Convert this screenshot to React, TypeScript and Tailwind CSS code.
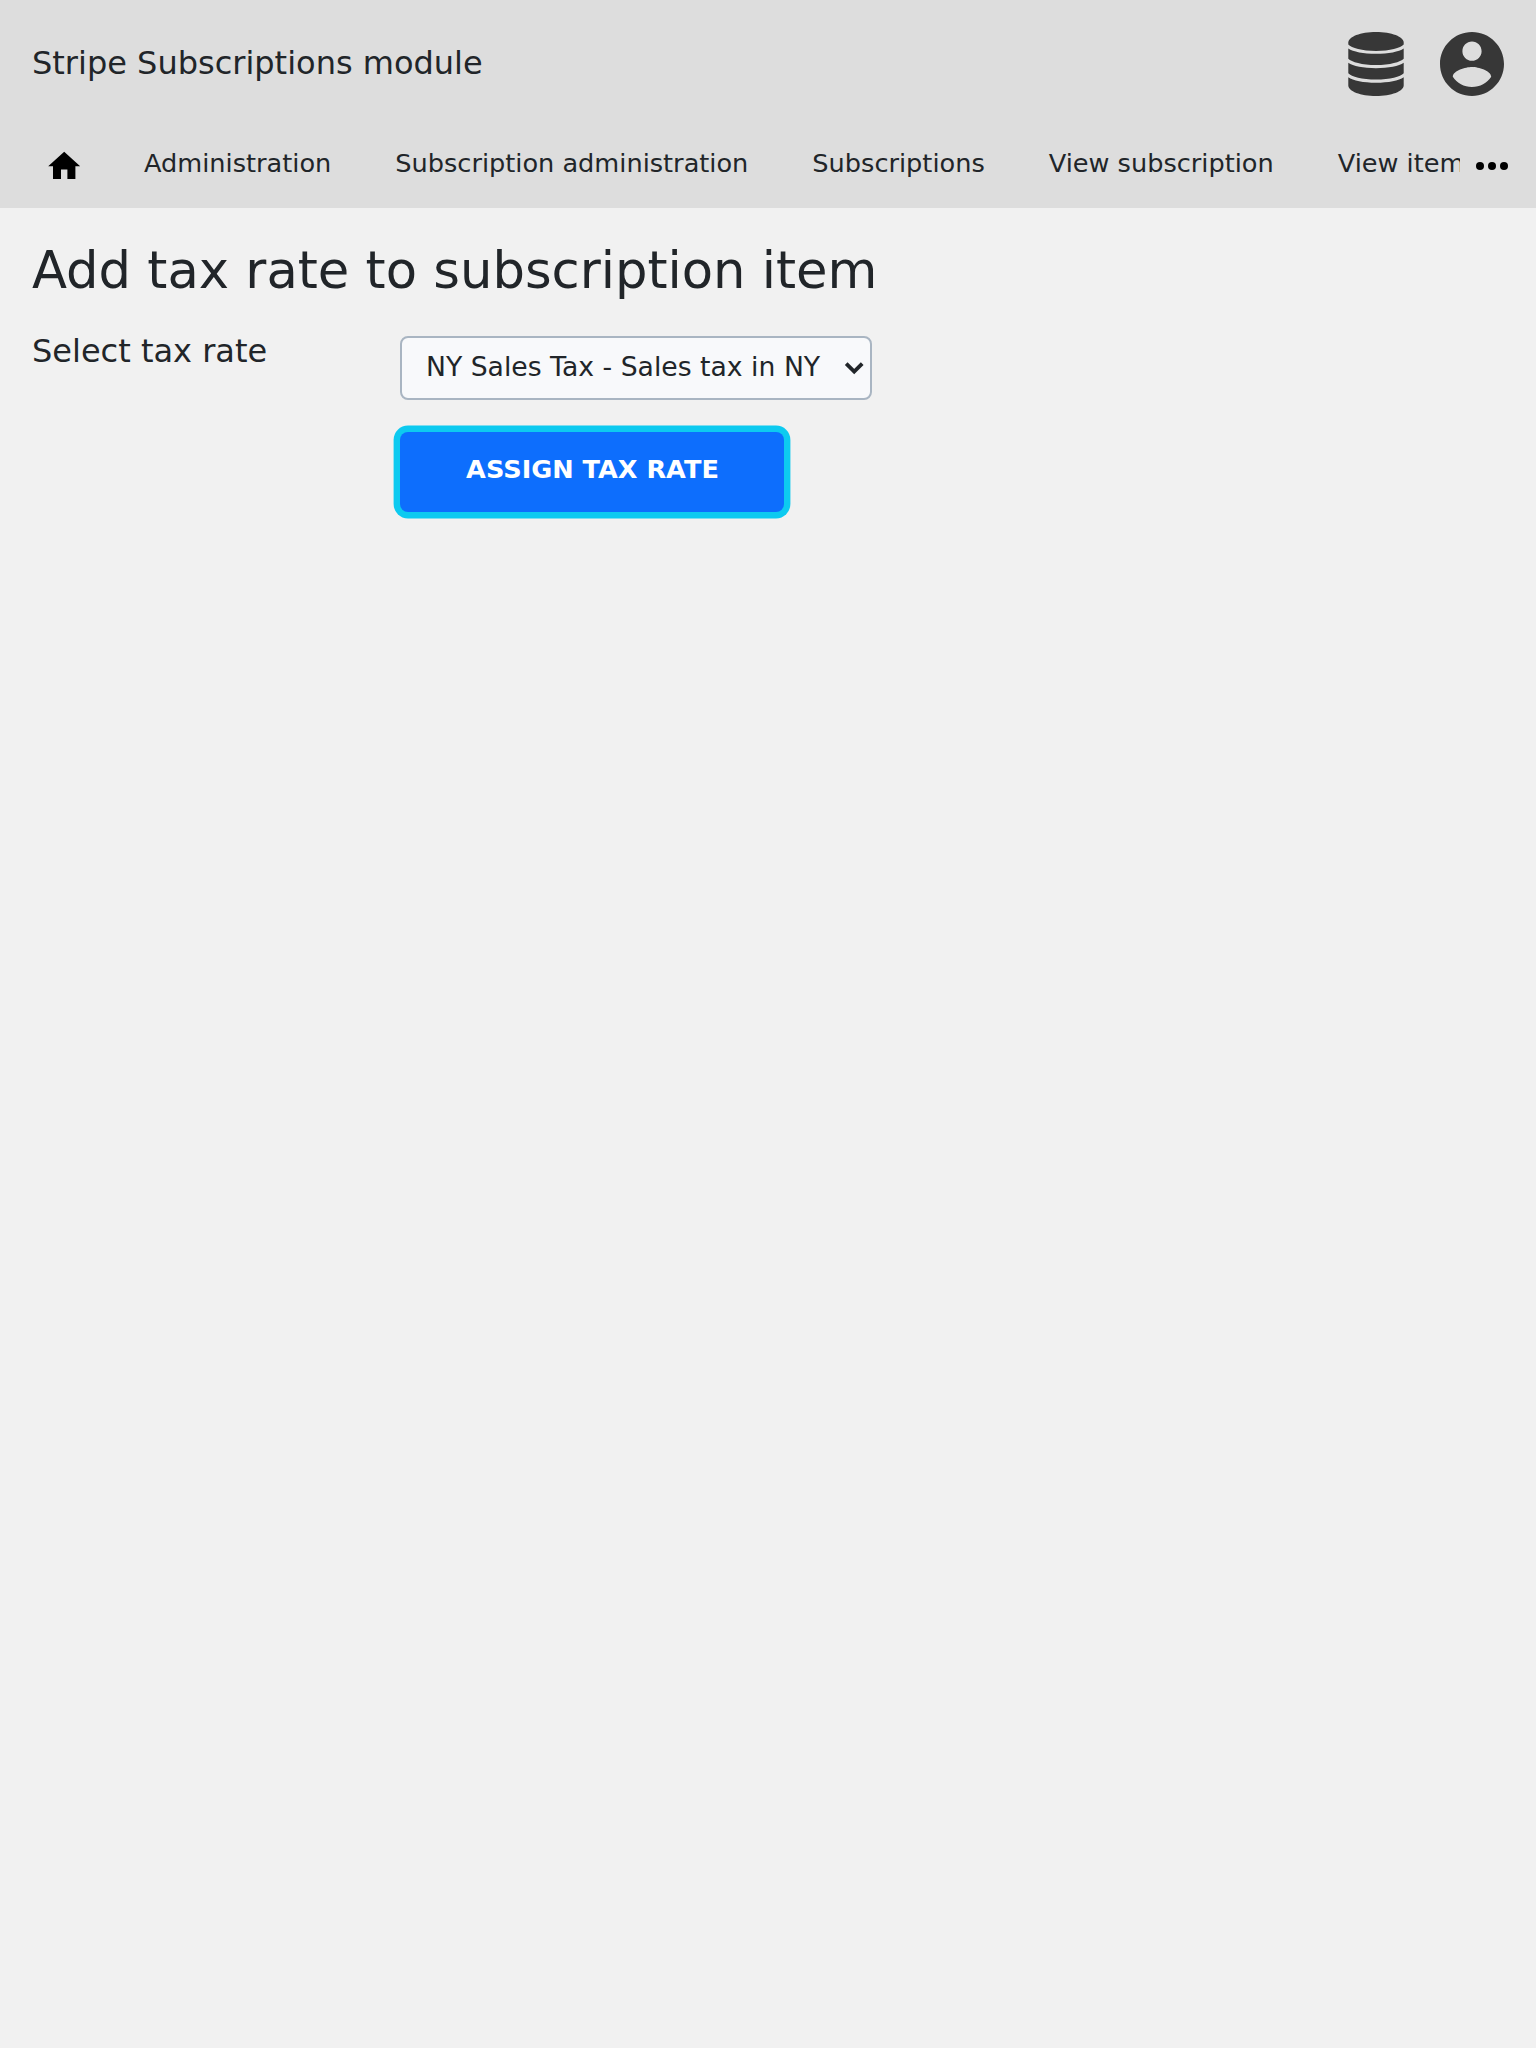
const nav = ['Administration', 'Subscription administration', 'Subscriptions', 'View subscription', 'View item'];

function DatabaseIcon() {
  return (
    <svg viewBox="0 0 64 64" className="size-16" fill="#373737">
      <path d="M4.300 10.500C4.300 4.700 16.500 0 32 0s27.700 4.700 27.700 10.500V12.500C56.500 16 46 18.900 32 18.900S7.500 16 4.300 12.500z" />
      <path d="M4.300 16.500C9 19.800 19.500 21.800 32 21.800S55 19.800 59.700 16.500V26.800C56.500 30 46 33.100 32 33.100S7.500 30 4.300 26.800z" />
      <path d="M4.300 30.800C9 34.200 19.500 36.200 32 36.200S55 34.200 59.700 30.800V41.200C56.500 44.500 46 47.600 32 47.600S7.500 44.500 4.300 41.200z" />
      <path d="M4.300 45.200C9 48.500 19.500 50.700 32 50.700S55 48.500 59.700 45.200V53.500C59.700 59.300 47.500 64 32 64S4.300 59.300 4.300 53.500z" />
    </svg>
  );
}

function AccountIcon() {
  return (
    <svg viewBox="2 2 20 20" className="size-16" fill="#373737">
      <path d="M12 2C6.480 2 2 6.480 2 12s4.480 10 10 10 10-4.480 10-10S17.520 2 12 2zm0 3c1.660 0 3 1.340 3 3s-1.340 3-3 3-3-1.340-3-3 1.340-3 3-3zm0 14.200c-2.500 0-4.710-1.280-6-3.220.03-1.990 4-3.080 6-3.080 1.990 0 5.970 1.090 6 3.080-1.290 1.940-3.500 3.220-6 3.220z" />
    </svg>
  );
}

export default function App() {
  return (
    <div className="h-[2048px] w-[1536px] overflow-hidden bg-[#f1f1f1] font-['DejaVu_Sans',sans-serif] text-[#212529]">
      <header className="h-52 bg-[#dddddd]">
        <div className="flex h-32 items-center justify-between px-8">
          <div className="pb-0.5 text-[32px] leading-[48px]">Stripe Subscriptions module</div>
          <div className="flex gap-8">
            <DatabaseIcon />
            <AccountIcon />
          </div>
        </div>
        <div className="flex h-20">
          <nav className="flex w-[1460px] overflow-hidden whitespace-nowrap pt-4 text-[25.6px] leading-[38px]">
            <a className="w-28 shrink-0 pt-[3px] pl-[44.8px]">
              <svg viewBox="0 0 24 24" className="size-[38.4px]" fill="#000">
                <path d="M10 20v-6h4v6h5v-8h3L12 3 2 12h3v8z" />
              </svg>
            </a>
            {nav.map((n) => <a key={n} className="shrink-0 px-8">{n}</a>)}
          </nav>
          <button className="ml-2 mt-3.5 size-12">
            <svg viewBox="0 0 24 24" className="size-12" fill="#000">
              <circle cx="6" cy="12" r="2" />
              <circle cx="12" cy="12" r="2" />
              <circle cx="18" cy="12" r="2" />
            </svg>
          </button>
        </div>
      </header>
      <main className="px-8">
        <h1 className="pt-8 text-[51.2px] leading-[61px]">Add tax rate to subscription item</h1>
        <div className="flex pt-[26px]">
          <label className="w-[368px] text-[32px] leading-[48px]">Select tax rate</label>
          <div className="relative mt-[9px]">
            <select className="block h-16 w-[472px] appearance-none rounded-lg border-2 border-[#a9b5c2] bg-[#f8f9fb] px-6 pb-0.5 text-[26.667px]">
              <option>NY Sales Tax - Sales tax in NY</option>
            </select>
            <svg viewBox="0 0 20 14" className="pointer-events-none absolute right-2 top-[26px] h-3.5 w-5" fill="none" stroke="#212529" strokeWidth="3.8">
              <path d="M2.200 1.600 10.200 9.600 18.200 1.600" />
            </svg>
          </div>
        </div>
        <button className="ml-[368px] mt-8 block h-20 w-96 rounded-lg bg-[#0d6efd] pb-1.5 pl-px text-[25.6px] font-bold text-white shadow-[0_0_0_6.4px_#0dcaf0]">ASSIGN TAX RATE</button>
      </main>
    </div>
  );
}
